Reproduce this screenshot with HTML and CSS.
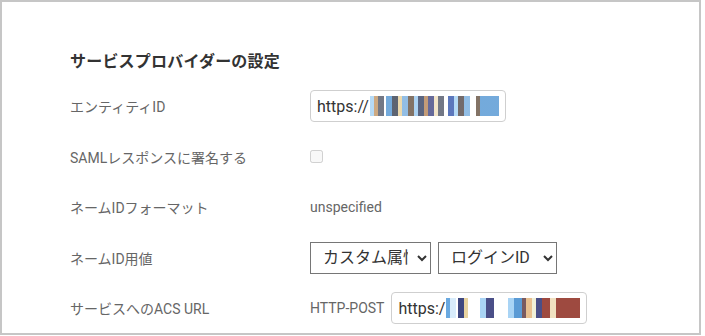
FILE: index.html
```html
<!DOCTYPE html>
<html lang="ja">
<head>
  <meta charset="UTF-8" />
  <title>サービスプロバイダーの設定</title>
  <link rel="stylesheet" href="styles.css">
</head>
<body>
  <div class="panel">
    <h3 class="section-title">サービスプロバイダーの設定</h3>

    <div class="row">
      <div class="label">エンティティID</div>
      <div class="value">
        <div class="textbox entity">https://<span class="mosaic m1"></span></div>
      </div>
    </div>

    <div class="row">
      <div class="label">SAMLレスポンスに署名する</div>
      <div class="value">
        <input type="checkbox" class="check" disabled>
      </div>
    </div>

    <div class="row">
      <div class="label">ネームIDフォーマット</div>
      <div class="value plain">unspecified</div>
    </div>

    <div class="row">
      <div class="label">ネームID用値</div>
      <div class="value">
        <select class="select attr">
          <option>カスタム属性</option>
        </select>
        <select class="select login">
          <option>ログインID</option>
        </select>
      </div>
    </div>

    <div class="row">
      <div class="label">サービスへのACS URL</div>
      <div class="value">
        <span class="plain binding">HTTP-POST</span>
        <div class="textbox acs">https:/<span class="mosaic m2"></span></div>
      </div>
    </div>
  </div>
</body>
</html>
```

FILE: styles.css
```css
body {
  margin: 0;
  font-family: Roboto, "Noto Sans CJK JP", sans-serif;
  background: #fff;
}
.panel {
  box-sizing: border-box;
  width: 701px;
  height: 335px;
  border: 2px solid #c6c6c6;
  padding: 49px 0 0 68px;
  overflow: hidden;
}
.section-title {
  margin: 0 0 8px;
  font-size: 16px;
  font-weight: bold;
  color: #333;
  line-height: 22px;
  letter-spacing: 0.2px;
}
.row {
  display: flex;
  align-items: center;
  height: 50.5px;
}
.label {
  width: 240px;
  font-size: 14px;
  color: #666;
}
.value {
  display: flex;
  align-items: center;
  gap: 7px;
}
.plain {
  font-size: 14px;
  color: #666;
}
.textbox {
  box-sizing: border-box;
  width: 196px;
  height: 32px;
  border: 1px solid #cfcfcf;
  border-radius: 4px;
  padding: 0 6px;
  display: flex;
  align-items: center;
  font-size: 16px;
  color: #333;
  white-space: nowrap;
  overflow: hidden;
}
.mosaic {
  display: inline-block;
  height: 20px;
  flex: 1;
  margin-left: 1px;
}
.m1 {
  background:
    linear-gradient(90deg,
      #a9d4f5 0 4px, #c49a6c 4px 8px, #5a6070 8px 14px, #fff 14px 16px,
      #5b9bd5 16px 22px, #404858 22px 28px, #e8d3a0 28px 32px, #7fb2e0 32px 38px,
      #6d5a4a 38px 44px, #9ecbf0 44px 48px, #3e4a6a 48px 54px, #b98a60 54px 58px,
      #4a4f88 58px 64px, #f0e0c0 64px 68px, #5a6070 68px 74px, #fff 74px 78px,
      #3f5fb0 78px 84px, #a9d4f5 84px 88px, #5a5050 88px 94px, #7fb2e0 94px 100px,
      #fff 100px 106px, #6d5a4a 106px 110px, #5b9bd5 110px 116px);
  opacity: 0.85;
}
.m2 {
  background:
    linear-gradient(90deg,
      #6aa9e0 0 4px, #d8ecfb 4px 10px, #fff 10px 12px, #3f4880 12px 18px,
      #e8d3a0 18px 22px, #fff 22px 34px, #a9d4f5 34px 40px, #4a4f88 40px 48px,
      #fff 48px 62px, #a9d4f5 62px 68px, #5b9bd5 68px 76px, #7a5a60 76px 80px,
      #e8c090 80px 86px, #f0f0d8 86px 90px, #4a4f88 90px 96px, #9e4a40 96px 104px,
      #f0e0c0 104px 110px, #9e4a40 110px 116px);
}
.check {
  margin: 0;
  width: 13px;
  height: 13px;
}
.select {
  box-sizing: border-box;
  height: 32px;
  font-family: Roboto, "Noto Sans CJK JP", sans-serif;
  font-size: 16px;
  color: #333;
  background: #fff;
  border: 1px solid #767676;
  border-radius: 0;
  padding: 0 6px 0 8px;
}
.attr {
  width: 121px;
}
.login {
  width: 119px;
}
```
